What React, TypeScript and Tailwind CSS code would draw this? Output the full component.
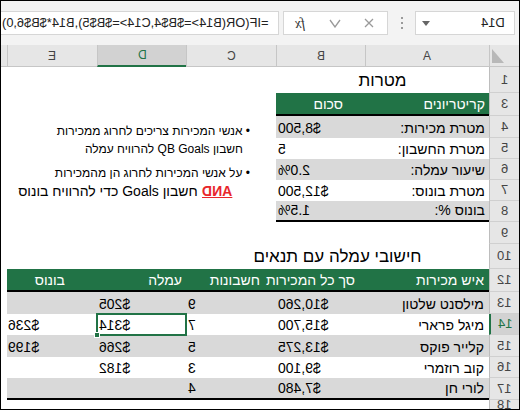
import React from 'react';

// widths of the sheet columns, left to right (sheet is shown mirrored, A at the right)
const W = {
  F: 'w-[6px]',
  E: 'w-[90px]',
  D: 'w-[89px]',
  C: 'w-[90px]',
  B: 'w-[89px]',
  A: 'w-[124px]',
};

const green = 'bg-[#217346]';
const gray = 'bg-[#d9d9d9]';

const Flip = ({ children, className = '' }: { children: React.ReactNode; className?: string }) => (
  <span className={`inline-block -scale-x-100 ${className}`}>{children}</span>
);

const Cell = ({ w, className = '', children }: { w: string; className?: string; children?: React.ReactNode }) => (
  <div className={`${w} shrink-0 h-full flex items-end whitespace-nowrap ${className}`}>{children}</div>
);

const RowHead = ({ n, active }: { n: string; active?: boolean }) => (
  <div
    className={`w-[30px] shrink-0 h-full flex items-center justify-center border-b border-[#d0d0d0] border-l text-[13px] ${
      active ? 'bg-[#d2d2d2] border-l-2 border-l-[#217346] text-[#217346]' : 'bg-[#e6e6e6] border-l-[#bdbdbd] text-[#444]'
    }`}
  >
    <Flip>{n}</Flip>
  </div>
);

const Row = ({ n, h, active, children }: { n: string; h: string; active?: boolean; children: React.ReactNode }) => (
  <div className={`flex ${h}`}>
    <div className="w-[488px] shrink-0 flex h-full">{children}</div>
    <RowHead n={n} active={active} />
  </div>
);

const Num = ({ children }: { children: React.ReactNode }) => (
  <span className="leading-[16px] pb-[2px]">
    <Flip>{children}</Flip>
  </span>
);

const Heb = ({ children }: { children: React.ReactNode }) => (
  <span dir="rtl" className="leading-[16px] pb-[2px]">
    {children}
  </span>
);

const Ribbon = () => (
  <div className="h-[44px] bg-[#f3f3f3] flex items-center">
    <div className="w-[278px] h-[24px] bg-white border border-[#d6d6d6] border-l-0 flex items-center justify-end pr-[10px] overflow-hidden text-[12.8px] text-[#222]">
      <Flip>=IF(OR(B14&gt;=$B$4,C14&gt;=$B$5),B14*$B$6,0)</Flip>
    </div>
    <div className="ml-[4px] w-[105px] h-[24px] bg-white border border-[#d6d6d6] flex items-center relative">
      <Flip className="ml-[11px] font-['Liberation_Serif',serif] italic text-[14px] text-[#333]">fx</Flip>
      <svg width="12" height="9" viewBox="0 0 12 9" className="ml-[24px]">
        <polyline points="1,1 6,8 11,1" fill="none" stroke="#9a9a9a" strokeWidth="1.3" />
      </svg>
      <svg width="10" height="10" viewBox="0 0 10 10" className="ml-[23px]">
        <path d="M1 1 L9 9 M9 1 L1 9" stroke="#9a9a9a" strokeWidth="1.3" />
      </svg>
    </div>
    <div className="ml-[13px] flex flex-col gap-[3px]">
      <span className="w-[2px] h-[2px] bg-[#9a9a9a]" />
      <span className="w-[2px] h-[2px] bg-[#9a9a9a]" />
      <span className="w-[2px] h-[2px] bg-[#9a9a9a]" />
    </div>
    <div className="ml-[12px] w-[100px] h-[24px] bg-white border border-[#d6d6d6] flex items-center">
      <svg width="8" height="5" viewBox="0 0 8 5" className="ml-[6px]">
        <polygon points="0,0 8,0 4,5" fill="#666" />
      </svg>
      <span className="ml-auto mr-[9px] text-[13px] text-[#222]">
        <Flip>D14</Flip>
      </span>
    </div>
  </div>
);

const ColHead = ({ w, l, active, first }: { w: string; l?: string; active?: boolean; first?: boolean }) => (
  <div
    className={`${w} shrink-0 h-full flex items-center justify-center text-[12px] ${first ? '' : 'border-l border-l-[#c6c6c6]'} ${
      active ? 'bg-[#d2d2d2] border-b-2 border-b-[#217346] text-[#217346]' : 'bg-[#e6e6e6] border-b border-b-[#c6c6c6] text-[#444]'
    }`}
  >
    {l && <Flip>{l}</Flip>}
  </div>
);

const ColHeads = () => (
  <div className="flex h-[22px]">
    <ColHead w={W.F} first />
    <ColHead w={W.E} l="E" />
    <ColHead w={W.D} l="D" active />
    <ColHead w={W.C} l="C" />
    <ColHead w={W.B} l="B" />
    <ColHead w={W.A} l="A" />
    <div className="w-[30px] shrink-0 h-full bg-[#e6e6e6] border-l border-l-[#c6c6c6] border-b border-b-[#c6c6c6] flex items-center pl-[2px]">
      <svg width="12" height="14" viewBox="0 0 12 14">
        <polygon points="0,0 0,14 12,14" fill="#b8b8b8" />
      </svg>
    </div>
  </div>
);

const goals = [
  { label: 'מטרת מכירות:', value: '$8,500' },
  { label: 'מטרת החשבון:', value: '5' },
  { label: 'שיעור עמלה:', value: '2.0%' },
  { label: 'מטרת בונוס:', value: '$12,500' },
  { label: 'בונוס %:', value: '1.5%' },
];

const notes: React.ReactNode[] = [
  <span dir="rtl" className="pr-[26px] text-[12px] leading-[14px]">• אנשי המכירות צריכים לחרוג ממכירות</span>,
  <span dir="rtl" className="pr-[33px] text-[12px] leading-[14px] pb-[3px]">חשבון QB Goals להרוויח עמלה</span>,
  <span dir="rtl" className="pr-[26px] text-[12px] leading-[14px]">• על אנשי המכירות לחרוג הן מהמכירות</span>,
  <span dir="rtl" className="pr-[44px] text-[14px] leading-[16px] pb-[2px]">
    <Flip className="text-[#e8262b] font-bold underline">AND</Flip> חשבון Goals כדי להרוויח בונוס
  </span>,
];

const people = [
  { name: 'מילסנט שלטון', sales: '$10,260', acc: '9', com: '$205', bonus: '' },
  { name: 'מיגל פרארי', sales: '$15,700', acc: '7', com: '$314', bonus: '$236' },
  { name: 'קלייר פוקס', sales: '$13,275', acc: '5', com: '$266', bonus: '$199' },
  { name: 'קוב רוזמרי', sales: '$9,100', acc: '3', com: '$182', bonus: '' },
  { name: 'לורי חן', sales: '$7,480', acc: '4', com: '', bonus: '' },
];

const goalHeights = ['h-[22px]', 'h-[21px]', 'h-[21px]', 'h-[21px]', 'h-[21px]'];
const peopleHeights = ['h-[22px]', 'h-[21px]', 'h-[22px]', 'h-[21px]', 'h-[22px]'];

export default function App() {
  return (
    <div className="w-[520px] h-[410px] overflow-hidden border border-black bg-white text-black text-[14px] font-['Liberation_Sans',Arial,sans-serif]">
      <Ribbon />
      <ColHeads />

      <Row n="1" h="h-[26px]">
        <Cell w={W.F} />
        <Cell w={W.E} />
        <Cell w={W.D} />
        <Cell w={W.C} />
        <Cell w="w-[213px]" className="justify-center">
          <span className="text-[17px] leading-[20px] pb-[2px]">מטרות</span>
        </Cell>
      </Row>

      <Row n="3" h="h-[23px]">
        <Cell w={W.F} />
        <Cell w={W.E} />
        <Cell w={W.D} />
        <Cell w={W.C} />
        <Cell w={W.B} className={`${green} text-white justify-end pr-[22px] border-b-2 border-black`}>
          <Heb>סכום</Heb>
        </Cell>
        <Cell w={W.A} className={`${green} text-white justify-end pr-[4px] border-b-2 border-black`}>
          <Heb>קריטריונים</Heb>
        </Cell>
      </Row>

      {goals.map((g, i) => (
        <Row key={g.label} n={String(i + 4)} h={goalHeights[i]}>
          <Cell w={W.F} />
          <Cell w={W.E} />
          <Cell w={W.D} />
          <Cell w={W.C} className={`justify-end ${i === 0 || i === 2 ? 'items-end pb-0' : 'items-center'}`}>
            {notes[i]}
          </Cell>
          <Cell w={W.B} className={`pl-[2px] ${i % 2 === 0 ? gray : ''} ${i === 4 ? 'border-b-2 border-black' : ''}`}>
            <Num>{g.value}</Num>
          </Cell>
          <Cell w={W.A} className={`justify-end pr-[4px] ${i % 2 === 0 ? gray : ''} ${i === 4 ? 'border-b-2 border-black' : ''}`}>
            <Heb>{g.label}</Heb>
          </Cell>
        </Row>
      ))}

      <Row n="9" h="h-[22px]">
        <Cell w="w-[488px]" />
      </Row>

      <Row n="10" h="h-[25px]">
        <Cell w={W.F} />
        <Cell w={W.E} />
        <Cell w={W.D} />
        <Cell w="w-[303px]" className="justify-center">
          <span dir="rtl" className="text-[17px] leading-[20px] pb-[2px]">חישובי עמלה עם תנאים</span>
        </Cell>
      </Row>

      <Row n="12" h="h-[23px]">
        <Cell w={W.F} />
        <Cell w={W.E} className={`${green} text-white justify-end pr-[32px] border-b-2 border-black`}>
          <Heb>בונוס</Heb>
        </Cell>
        <Cell w={W.D} className={`${green} text-white justify-end pr-[4px] border-b-2 border-black`}>
          <Heb>עמלה</Heb>
        </Cell>
        <Cell w={W.C} className={`${green} text-white justify-end pr-[16px] border-b-2 border-black`}>
          <Heb>חשבונות</Heb>
        </Cell>
        <Cell w={W.B} className={`${green} text-white justify-end pr-[10px] border-b-2 border-black`}>
          <Heb>סך כל המכירות</Heb>
        </Cell>
        <Cell w={W.A} className={`${green} text-white justify-end pr-[5px] border-b-2 border-black`}>
          <Heb>איש מכירות</Heb>
        </Cell>
      </Row>

      {people.map((p, i) => {
        const bg = i % 2 === 0 ? gray : '';
        const last = i === 4 ? 'border-b-2 border-black' : '';
        const sel = i === 1;
        return (
          <Row key={p.name} n={String(i + 13)} h={peopleHeights[i]} active={sel}>
            <Cell w={W.F} />
            <Cell w={W.E} className={`pl-[1px] ${bg} ${last}`}>
              <Num>{p.bonus}</Num>
            </Cell>
            <Cell w={W.D} className={`pl-[2px] ${bg} ${last} ${sel ? 'relative' : ''}`}>
              <Num>{p.com}</Num>
              {sel && (
                <>
                  <div className="absolute -left-px -right-px -top-px -bottom-px border-2 border-[#217346]" />
                  <div className="absolute -left-[3px] -bottom-[3px] w-[6px] h-[6px] bg-[#217346] border border-white" />
                </>
              )}
            </Cell>
            <Cell w={W.C} className={`pl-[2px] ${bg} ${last}`}>
              <Num>{p.acc}</Num>
            </Cell>
            <Cell w={W.B} className={`pl-[2px] ${bg} ${last}`}>
              <Num>{p.sales}</Num>
            </Cell>
            <Cell w={W.A} className={`justify-end pr-[5px] ${bg} ${last}`}>
              <Heb>{p.name}</Heb>
            </Cell>
          </Row>
        );
      })}

      <Row n="18" h="h-[10px]">
        <Cell w="w-[488px]" />
      </Row>
    </div>
  );
}
